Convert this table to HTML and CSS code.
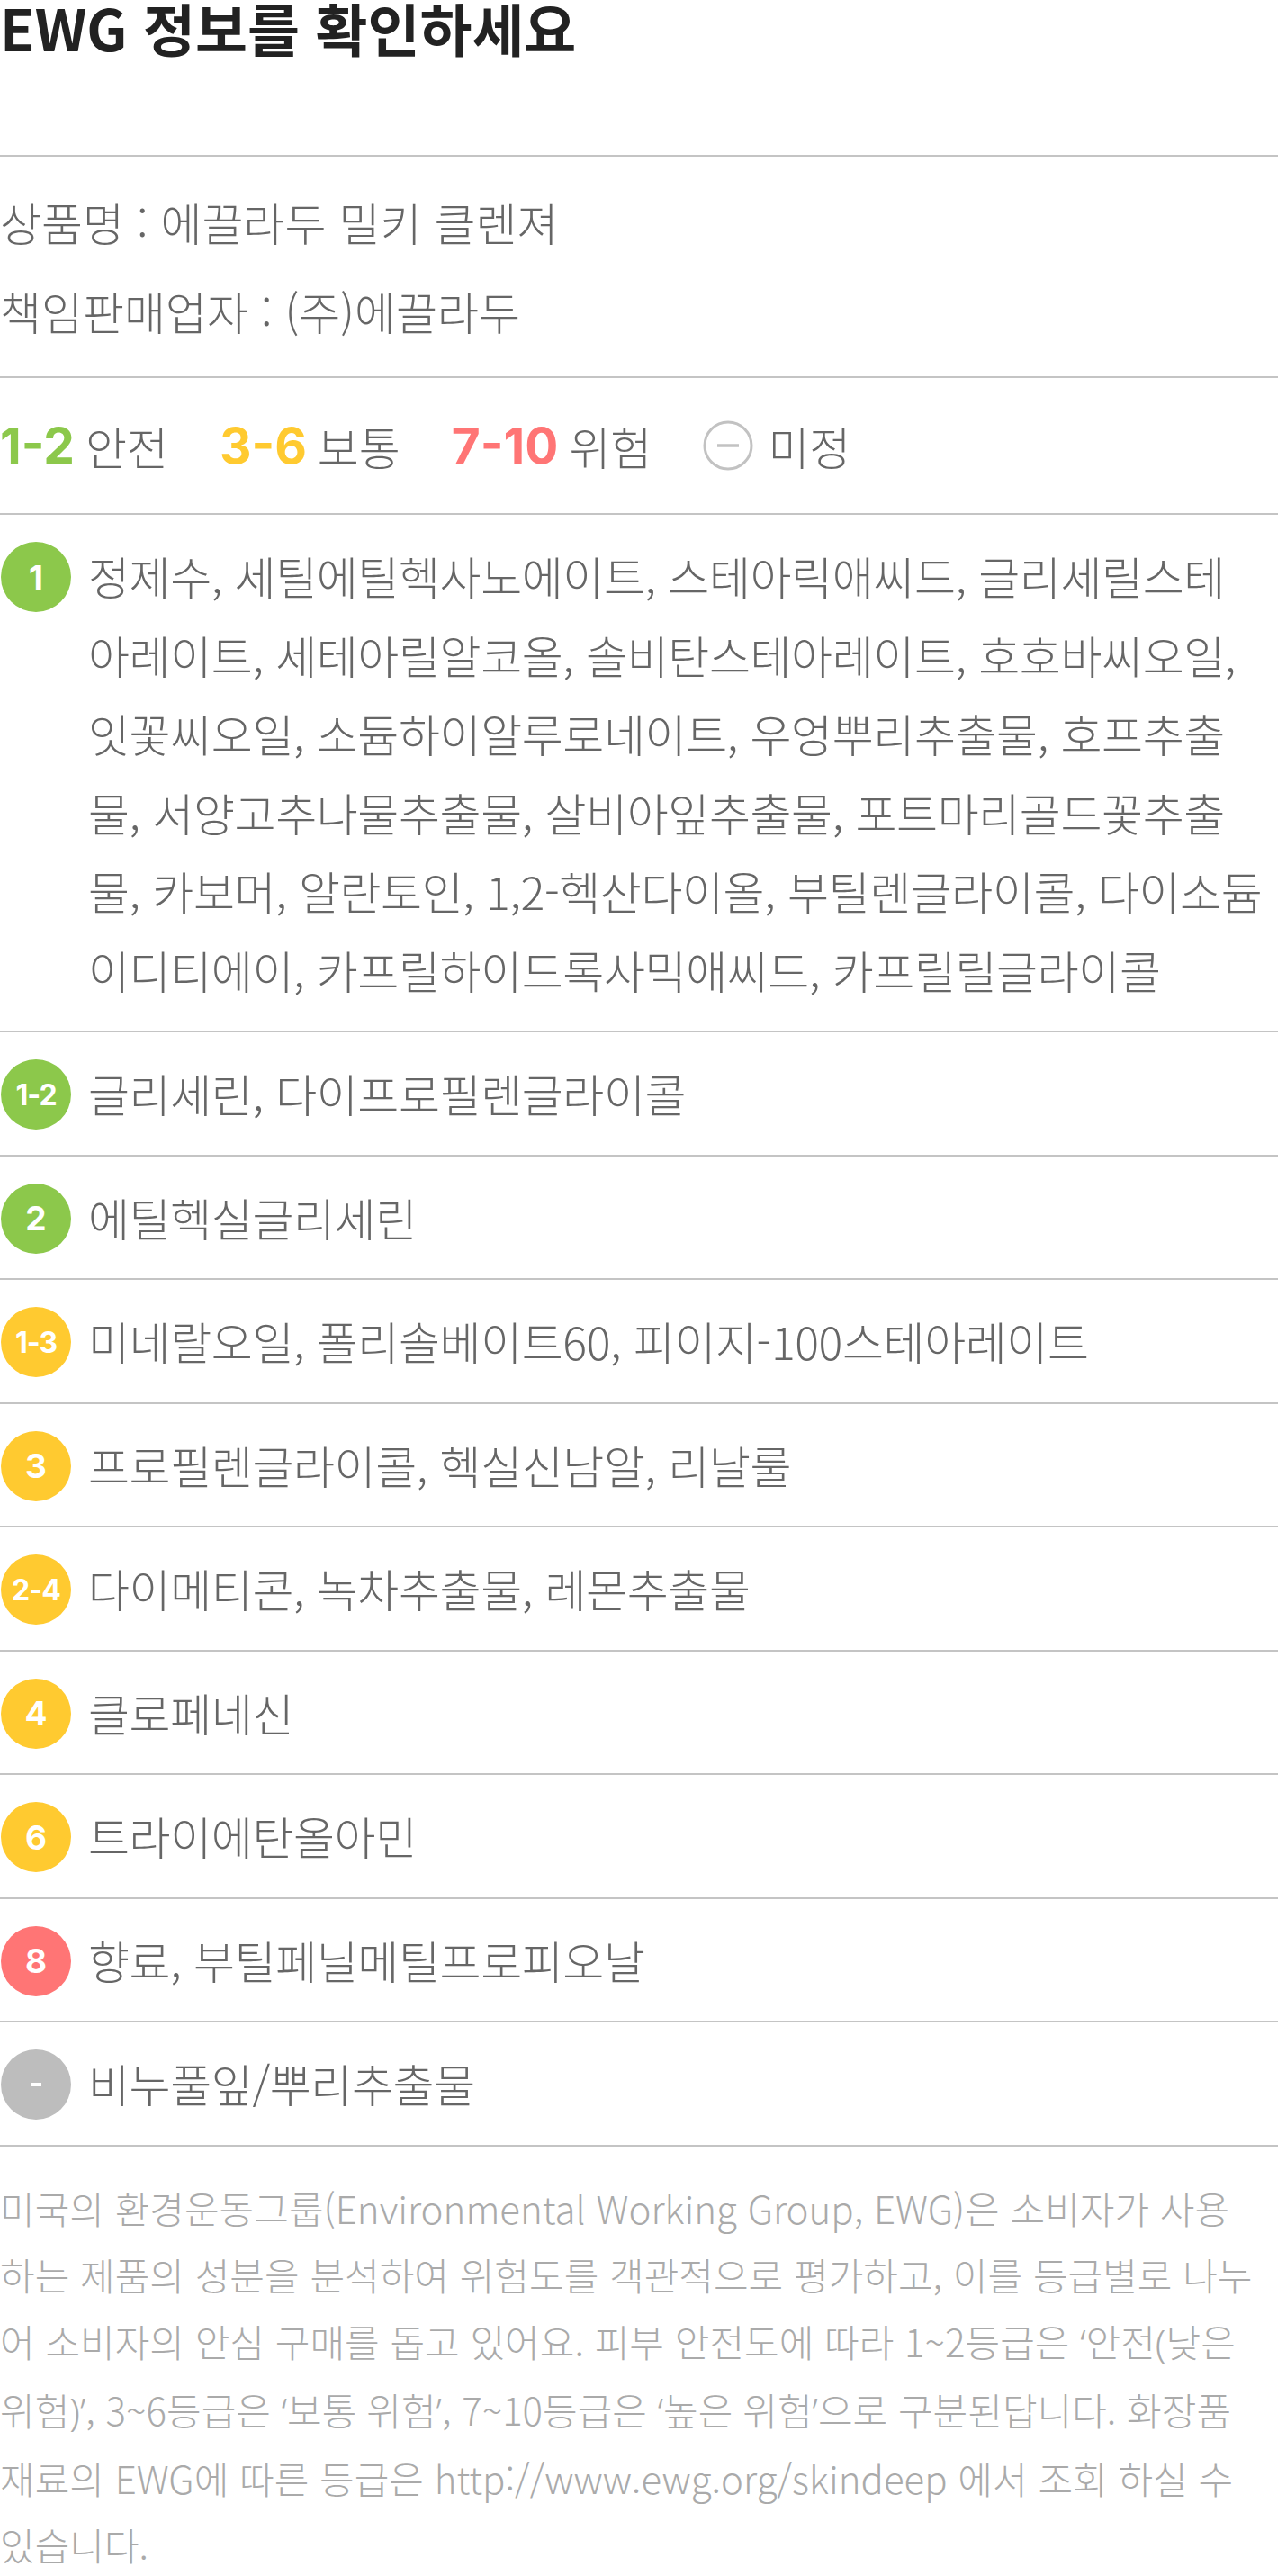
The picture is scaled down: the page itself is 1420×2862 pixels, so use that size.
FILE: index.html
```html
<!DOCTYPE html>
<html lang="ko">
<head>
  <meta charset="UTF-8" />
  <title>EWG 정보</title>
  <link rel="stylesheet" href="styles.css">
</head>
<body>

  <header class="ewg-head">
    <h1>EWG 정보를 확인하세요</h1>
  </header>

  <!-- 상품 정보 -->
  <section class="product">
    <p>상품명 : 에끌라두 밀키 클렌져</p>
    <p>책임판매업자 : (주)에끌라두</p>
  </section>

  <!-- 등급 안내 -->
  <div class="legend">
    <span class="legend-item"><b class="num green">1-2</b> 안전</span>
    <span class="legend-item"><b class="num yellow">3-6</b> 보통</span>
    <span class="legend-item"><b class="num red">7-10</b> 위험</span>
    <span class="legend-item">
      <svg class="minus-icon" width="56" height="56" viewBox="0 0 56 56">
        <circle cx="28" cy="28" r="26" fill="none" stroke="#c2c2c2" stroke-width="3"/>
        <line x1="16" y1="28" x2="40" y2="28" stroke="#c2c2c2" stroke-width="3.5"/>
      </svg>
      미정
    </span>
  </div>

  <!-- 성분 목록 -->
  <ul class="grades">
    <li class="grade-row">
      <span class="badge green">1</span>
      <p>정제수, 세틸에틸헥사노에이트, 스테아릭애씨드, 글리세릴스테<br>아레이트, 세테아릴알코올, 솔비탄스테아레이트, 호호바씨오일,<br>잇꽃씨오일, 소듐하이알루로네이트, 우엉뿌리추출물, 호프추출<br>물, 서양고추나물추출물, 살비아잎추출물, 포트마리골드꽃추출<br>물, 카보머, 알란토인, 1,2-헥산다이올, 부틸렌글라이콜, 다이소듐<br>이디티에이, 카프릴하이드록사믹애씨드, 카프릴릴글라이콜</p>
    </li>
    <li class="grade-row">
      <span class="badge green range">1-2</span>
      <p>글리세린, 다이프로필렌글라이콜</p>
    </li>
    <li class="grade-row">
      <span class="badge green">2</span>
      <p>에틸헥실글리세린</p>
    </li>
    <li class="grade-row">
      <span class="badge yellow range">1-3</span>
      <p>미네랄오일, 폴리솔베이트60, 피이지-100스테아레이트</p>
    </li>
    <li class="grade-row">
      <span class="badge yellow">3</span>
      <p>프로필렌글라이콜, 헥실신남알, 리날룰</p>
    </li>
    <li class="grade-row">
      <span class="badge yellow range">2-4</span>
      <p>다이메티콘, 녹차추출물, 레몬추출물</p>
    </li>
    <li class="grade-row">
      <span class="badge yellow">4</span>
      <p>클로페네신</p>
    </li>
    <li class="grade-row">
      <span class="badge yellow">6</span>
      <p>트라이에탄올아민</p>
    </li>
    <li class="grade-row">
      <span class="badge red">8</span>
      <p>향료, 부틸페닐메틸프로피오날</p>
    </li>
    <li class="grade-row">
      <span class="badge gray"><i class="dash"></i></span>
      <p>비누풀잎/뿌리추출물</p>
    </li>
  </ul>

  <p class="note">미국의 환경운동그룹(Environmental Working Group, EWG)은 소비자가 사용<br>하는 제품의 성분을 분석하여 위험도를 객관적으로 평가하고, 이를 등급별로 나누<br>어 소비자의 안심 구매를 돕고 있어요. 피부 안전도에 따라 1~2등급은 <span class="q">‘안전(낮은</span><br><span class="q">위험)’</span>, 3~6등급은 <span class="q">‘보통 위험’</span>, 7~10등급은 <span class="q">‘높은 위험’</span>으로 구분된답니다. 화장품<br>재료의 EWG에 따른 등급은 http://www.ewg.org/skindeep 에서 조회 하실 수<br>있습니다.</p>

</body>
</html>
```

FILE: styles.css
```css
body {
  margin: 0;
  background-color: #fff;
  color: #666;
  font-family: "Noto Sans CJK KR", "Noto Sans", sans-serif;
}

p {
  margin: 0;
}

.ewg-head {
  height: 172px;
  border-bottom: 2px solid #c4c4c4;
}

.ewg-head h1 {
  margin: 0;
  font-size: 63px;
  line-height: 60px;
  font-weight: 700;
  color: #222;
}

.product {
  padding: 23px 0;
  border-bottom: 2px solid #c4c4c4;
  font-size: 50px;
  font-weight: 300;
  line-height: 99px;
}

.legend {
  display: flex;
  align-items: center;
  height: 150px;
  border-bottom: 2px solid #c4c4c4;
  font-size: 50px;
  font-weight: 300;
}

.legend-item {
  display: flex;
  align-items: center;
  gap: 12px;
  margin-right: 57px;
}

.num {
  font-family: Inter, Roboto, sans-serif;
  font-weight: 700;
  font-size: 55px;
}

.num.green { color: #8cc84b; }
.num.yellow { color: #ffca30; }
.num.red { color: #ff7575; }

.minus-icon {
  display: block;
  margin-right: 4px;
}

.grades {
  list-style: none;
  margin: 0;
  padding: 0;
}

.grade-row {
  display: flex;
  align-items: flex-start;
  padding: 24px 0;
  border-bottom: 2px solid #c4c4c4;
}

.grade-row p {
  flex: 1;
  font-size: 50px;
  font-weight: 300;
  line-height: 87.5px;
  letter-spacing: -0.4px;
}

.badge {
  flex: none;
  display: flex;
  align-items: center;
  justify-content: center;
  width: 78px;
  height: 78px;
  margin: 6px 19px 0 1px;
  border-radius: 50%;
  color: #fff;
  font-family: Inter, Roboto, sans-serif;
  font-weight: 700;
  font-size: 37px;
}

.badge.range {
  font-size: 32px;
  letter-spacing: -1px;
}

.badge.green { background-color: #8cc84b; }
.badge.yellow { background-color: #ffca30; }
.badge.red { background-color: #ff7575; }
.badge.gray { background-color: #bdbdbd; }

.dash {
  display: block;
  width: 12px;
  height: 4px;
  background-color: #fff;
}

.note {
  padding-top: 31px;
  font-size: 42px;
  font-weight: 300;
  line-height: 74px;
  color: #aaa;
}

.note .q {
  font-family: "Noto Sans", "Noto Sans CJK KR", sans-serif;
}
```
